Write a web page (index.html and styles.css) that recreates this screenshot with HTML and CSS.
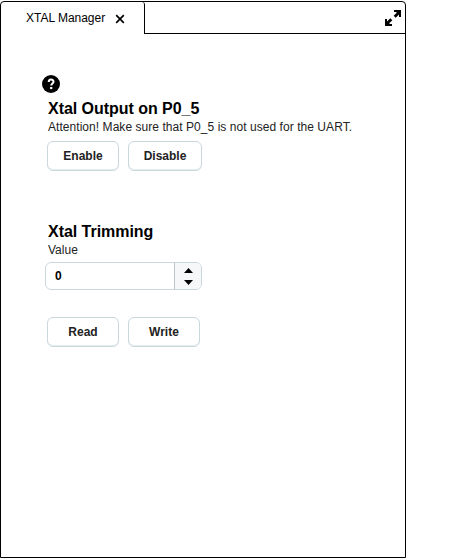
FILE: index.html
```html
<!DOCTYPE html>
<html lang="en">
<head>
<meta charset="utf-8">
<title>XTAL Manager</title>
<link rel="stylesheet" href="styles.css">
</head>
<body>
<main class="panel">
  <header class="tabs">
    <div class="tab"><span class="tab-title">XTAL Manager</span>
      <svg class="close" width="10" height="10" viewBox="0 0 10 10"><path d="M1.2 1.2L8.8 8.8M8.8 1.2L1.2 8.8" stroke="#000" stroke-width="1.7"/></svg>
    </div>
    <div class="tab-fill">
      <svg width="16" height="16" viewBox="0 0 16 16"><path d="M9 0H16V7H14V4.5L10.7 7.8L8.7 5.8L11.5 3V2H9ZM0 9H2V11.5L5.3 8.2L7.3 10.2L4.5 13V14H7V16H0Z"/></svg>
    </div>
  </header>
  <div class="content">
    <svg class="help" width="18" height="18" viewBox="0 0 18 18"><circle cx="9" cy="9" r="9"/><path d="M6.7 7C6.7 3.8 11.5 3.9 11.5 6.7C11.5 8.5 9.2 8.5 9.2 10.6" fill="none" stroke="#fff" stroke-width="2"/><rect x="8.1" y="12" width="2.2" height="2.1" fill="#fff"/></svg>
    <section class="output">
      <h2>Xtal Output on P0_5</h2>
      <p class="note">Attention! Make sure that P0_5 is not used for the UART.</p>
      <div class="buttons"><button>Enable</button><button class="wide">Disable</button></div>
    </section>
    <section class="trimming">
      <h2>Xtal Trimming</h2>
      <p>Value</p>
      <div class="spinner"><span class="value">0</span>
        <div class="arrows">
          <svg width="9" height="5" viewBox="0 0 9 5"><path d="M0 5L4.5 0L9 5Z"/></svg>
          <svg width="9" height="5" viewBox="0 0 9 5"><path d="M0 0H9L4.5 5Z"/></svg>
        </div>
      </div>
      <div class="buttons"><button>Read</button><button>Write</button></div>
    </section>
  </div>
</main>
</body>
</html>
```
FILE: styles.css
```css
* { box-sizing: border-box; }
body { margin: 0; background: #fff; color: #222; font: 12px/14px "Liberation Sans", Arial, sans-serif; }
svg { display: block; }
.panel { width: 406px; height: 557px; margin-top: 1px; border: 1px solid #000; border-radius: 4px 4px 0 0; }
.tabs { display: flex; height: 32px; }
.tab { width: 144px; padding: 9px 0 0 25px; display: flex; align-items: flex-start; border-right: 1px solid #000; border-top-right-radius: 3px; color: #000; }
.tab-title { width: 89px; letter-spacing: -.02px; white-space: nowrap; }
.close { margin-top: 3px; }
.tab-fill { flex: 1; display: flex; justify-content: flex-end; padding: 8px 4px 0 0; border-bottom: 1px solid #000; }
.content { padding: 41px 0 0 46px; }
.help { margin-left: -5px; }
section h2 { margin: 0 0 0 1px; font-size: 16px; line-height: 18px; letter-spacing: -.04px; color: #000; }
section p { margin: 2px 0 0 1px; white-space: nowrap; }
.output { padding-top: 7px; }
.note { letter-spacing: .05px; }
.trimming { padding-top: 52px; }
.buttons { display: flex; gap: 9px; margin-top: 7px; }
button { width: 72px; height: 30px; padding: 0 0 1px; border: 1px solid #c9d8dc; border-radius: 6px; background: #fff; box-shadow: inset 0 -1px 0 #e4ecee; color: #222; font: bold 12px "Liberation Sans", Arial, sans-serif; }
button.wide { width: 74px; }
.spinner { width: 157px; height: 28px; margin: 5px 0 0 -2px; display: flex; border: 1px solid #c9d8dc; border-radius: 6px; overflow: hidden; }
.value { width: 128px; padding: 6px 9px; font-weight: bold; color: #000; }
.arrows { flex: 1; display: flex; flex-direction: column; align-items: center; justify-content: center; gap: 7px; padding-top: 1px; border-left: 1px solid #bdc5c9; background: #f5f7f9; }
.trimming .buttons { margin-top: 27px; }
```
